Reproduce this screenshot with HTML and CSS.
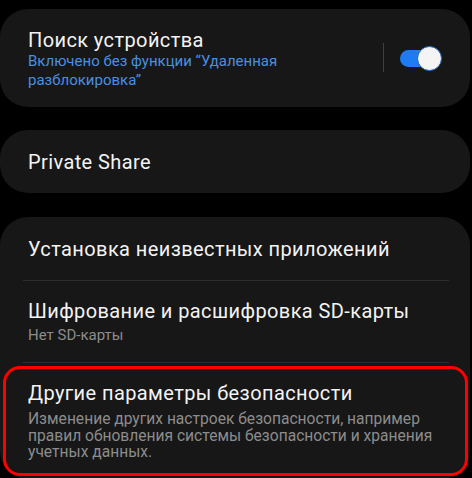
FILE: index.html
```html
<!DOCTYPE html>
<html lang="ru">
<head>
<meta charset="utf-8">
<link rel="stylesheet" href="styles.css">
</head>
<body>
<div class="screen">
  <div class="card card-find">
    <div class="texts">
      <div class="title">Поиск устройства</div>
      <div class="sub blue">Включено без функции “Удаленная<br>разблокировка”</div>
    </div>
    <div class="vline"></div>
    <div class="toggle"><div class="thumb"></div></div>
  </div>

  <div class="card card-share">
    <div class="title">Private Share</div>
  </div>

  <div class="card card-list">
    <div class="item item-a">
      <div class="title">Установка неизвестных приложений</div>
    </div>
    <div class="divider"></div>
    <div class="item item-b">
      <div class="title">Шифрование и расшифровка SD-карты</div>
      <div class="sub gray small">Нет SD-карты</div>
    </div>
    <div class="divider"></div>
    <div class="item item-c">
      <div class="title">Другие параметры безопасности</div>
      <div class="sub gray desc">Изменение других настроек безопасности, например<br>правил обновления системы безопасности и хранения<br>учетных данных.</div>
      <div class="highlight"></div>
    </div>
  </div>
</div>
</body>
</html>
```

FILE: styles.css
```css
html, body {
  margin: 0;
  padding: 0;
  background: #000;
}
body {
  width: 472px;
  height: 478px;
  overflow: hidden;
  font-family: Roboto, "Noto Sans", "Liberation Sans", sans-serif;
  color: #f2f2f2;
}
.screen {
  padding-top: 9px;
  width: 470px;
}
.card {
  background: #171717;
  border-radius: 28px;
}
.title {
  font-size: 20px;
  line-height: 24px;
  letter-spacing: 0.4px;
  color: #f3f3f3;
}
.sub {
  font-size: 15px;
  line-height: 19px;
}
.blue { color: #4a8fe0; }
.gray { color: #8c8c8c; }
.small { font-size: 15px; line-height: 18px; }

.card-find {
  height: 98px;
  box-sizing: border-box;
  display: flex;
  align-items: center;
  padding: 0 28px;
}
.card-find .texts {
  flex: 1;
  padding-top: 1px;
}
.vline {
  width: 1px;
  height: 29px;
  background: #3f3f3f;
  margin-right: 16px;
  margin-top: -1px;
}
.toggle {
  position: relative;
  width: 35px;
  height: 17px;
  border-radius: 9px;
  background: #1d7cf2;
  margin-right: 7px;
}
.thumb {
  position: absolute;
  right: -7px;
  top: -4px;
  width: 23px;
  height: 23px;
  border-radius: 50%;
  background: #f4f4f4;
  border: 1px solid #1b5fb5;
}

.card-share {
  margin-top: 23px;
  height: 63px;
  display: flex;
  align-items: center;
  padding: 0 28px;
}
.card-share .title { margin-top: 1px; }

.card-list {
  margin-top: 24px;
  height: 262px;
}
.item {
  padding: 0 28px;
}
.item-a {
  height: 63px;
  display: flex;
  align-items: center;
}
.item-b {
  height: 81px;
  box-sizing: border-box;
  padding-top: 18px;
}
.item-b .sub { margin-top: 3px; }
.item-c {
  position: relative;
  height: 113px;
  box-sizing: border-box;
  padding-top: 18px;
}
.item-c .desc {
  font-size: 15.6px;
  line-height: 16.5px;
  margin-top: 6px;
}
.divider {
  height: 1px;
  background: #2c2c2c;
  margin: 0 21px 0 23px;
}
.highlight {
  position: absolute;
  left: 3px;
  right: 2px;
  top: 3px;
  bottom: 0;
  border: 3px solid #ff0000;
  border-radius: 17px;
}
```
